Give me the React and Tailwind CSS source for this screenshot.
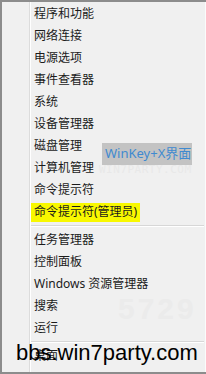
const groups = [
  ['程序和功能', '网络连接', '电源选项', '事件查看器', '系统', '设备管理器', '磁盘管理', '计算机管理', '命令提示符', '命令提示符(管理员)'],
  ['任务管理器', '控制面板', 'Windows 资源管理器', '搜索', '运行'],
  ['桌面'],
];

const MenuRow = ({ label }) => {
  const active = label === '命令提示符(管理员)';
  return (
    <div className="h-[22px] flex items-center">
      <span className={active ? 'bg-[#f8f800] px-[3px] h-[19px] flex items-center' : 'px-[3px]'}>{label}</span>
    </div>
  );
};

const Separator = () => (
  <div className="h-[6px] flex flex-col justify-center">
    <div className="border-t border-[#d7d7d7]" />
    <div className="border-t border-white" />
  </div>
);

export default function App() {
  return (
    <div
      className="relative w-[206px] h-[374px] overflow-hidden bg-[#f0f0f0] border-t-2 border-l-2 border-b-2 border-[#8c8c8c] flex text-[12px] text-[#1b1b1b]"
      style={{ fontFamily: '"Noto Sans", "Noto Sans CJK SC", sans-serif' }}
    >
      <div className="w-[28px] shrink-0 border-r border-[#dcdcdc]" />
      <div className="flex-1 border-l border-white border-r border-r-[#fbfbfb] flex flex-col pt-[1px] pr-[1px]">
        {groups.map((g, i) => (
          <div key={i}>
            {i > 0 && <Separator />}
            {g.map((label) => (
              <MenuRow key={label} label={label} />
            ))}
          </div>
        ))}
      </div>

      {/* faint watermark */}
      <div className="absolute left-[122px] top-[146px] text-[11px] text-[#e6e6e6]" style={{ fontFamily: '"DejaVu Sans Mono", monospace' }}>
        FOR
      </div>
      <div className="absolute left-[97px] top-[160px] text-[11px] text-[#e8e8e8] tracking-[0.5px]" style={{ fontFamily: '"DejaVu Sans Mono", monospace' }}>
        WIN7PARTY.COM
      </div>
      <div className="absolute left-[116px] top-[292px] text-[30px] font-bold text-[#ebebeb] leading-none tracking-[3px]" style={{ fontFamily: '"Liberation Sans", sans-serif' }}>
        5729
      </div>

      {/* label box */}
      <div className="absolute left-[100px] top-[141px] w-[90px] h-[22px] bg-[#c3c3c3] flex items-center pl-[3px] text-[13px] text-[#3f8ad0]">
        WinKey+X界面
      </div>

      {/* site overlay */}
      <div className="absolute left-[14px] top-[340px] text-[22px] text-black leading-none" style={{ fontFamily: '"Liberation Sans", sans-serif' }}>
        bbs.win7party.com
      </div>
    </div>
  );
}
